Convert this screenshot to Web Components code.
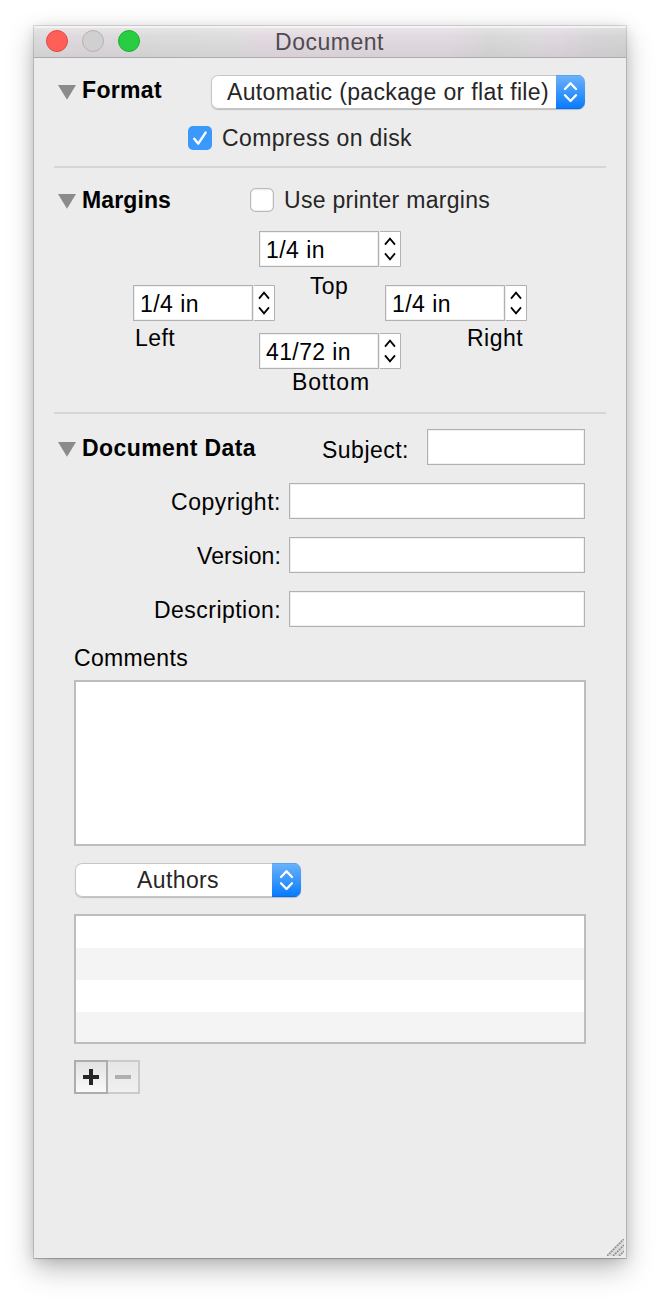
<!DOCTYPE html>
<html lang="en"><head><meta charset="utf-8"><title>Document</title>
<style>
html,body{margin:0;background:#fff}
body{width:660px;height:1300px;overflow:hidden;font:23px/26px "Liberation Sans",Arial,sans-serif;color:#000}
</style></head><body>
<document-inspector></document-inspector>
<script>
const define=(name,html,ready)=>{
  const t=document.createElement('template');t.innerHTML=html;
  customElements.define(name,class extends HTMLElement{
    constructor(){super();this.attachShadow({mode:'open'}).append(t.content.cloneNode(true));}
    connectedCallback(){ready&&ready.call(this);}
  });
};
/* A single-line label; "w" is its advance width, reached through letter spacing. */
define('text-label',`<style>:host{display:block;white-space:nowrap;height:26px;line-height:26px}span{display:inline-block}</style><span><slot></slot></span>`,function(){
  const w=+this.getAttribute('w');if(!w)return;
  const s=this.shadowRoot.querySelector('span');
  s.style.letterSpacing=(w-s.getBoundingClientRect().width)/this.textContent.length+'px';
});
define('title-bar',`<style>
:host{display:flex;box-sizing:border-box;height:32px;border-bottom:1px solid #b0a9b0;border-top:2px solid #f4f2f4;align-items:flex-start;padding-left:12px;
background:linear-gradient(#fff4,#0000 30%,#0000000c),linear-gradient(90deg,#dcdbdc 0,#dfd9de 8%,#dcdbdc 18%,#dedddd 34%,#e2dae0 38%,#e2dae1 70%,#d9d8d9 77%,#dcdbdc 83%,#e0d8e0 88%,#d7d5d7 94%,#d5d4d5)}
i{box-sizing:border-box;width:22px;height:22px;border-radius:50%;margin:2px 14px 0 0;border:1px solid}
.c{background:#ff5f57;border-color:#e2463f}.m{background:#d1d0d1;border-color:#b4b1b4}.z{background:#28cd41;border-color:#1dad2b}
::slotted(text-label){color:#504b50;margin:1px 0 0 121px}
</style><i class="c"></i><i class="m"></i><i class="z"></i><slot></slot>`);
define('disclosure-title',`<style>:host{display:flex;font-weight:bold}svg{margin:var(--tri,9px) 6px 0 0;flex:none}</style>
<svg width="18" height="15"><path d="M0 0H18L9 14.8Z" fill="#8b8b8b"/></svg><slot></slot>`);
define('popup-button',`<style>
:host{display:flex;box-sizing:border-box;height:34px;border-radius:7px;background:#fff;box-shadow:inset 0 0 0 1px #c6c6c6,0 1px 1px #0003;overflow:hidden;color:#262626}
div{flex:1;padding:4px 0 0 var(--inset)}
b{width:29px;background:linear-gradient(#6cb3fa,#067aff);box-shadow:inset 0 1px #5aa3ee,inset 0 -1px #0569ee}
svg{display:block}
</style><div><slot></slot></div><b><svg width="29" height="34" fill="none" stroke="#fff" stroke-width="2.3" stroke-linecap="round" stroke-linejoin="round"><path d="M9 14L14.5 8.3L20 14M9 20.3L14.5 26L20 20.3"/></svg></b>`);
define('check-box',`<style>:host{display:flex;color:#262626}
svg{flex:none;margin:0 10px 0 0;overflow:visible}.on{display:none}:host([checked]) .on{display:block}:host([checked]) .off{display:none}</style>
<svg class="off" width="24" height="24"><rect x=".6" y=".6" width="22.8" height="22.8" rx="5" fill="#fff" stroke="#b9b9b9" stroke-width="1.2"/><path d="M5 2H19" stroke="#f0f0f0"/></svg>
<svg class="on" width="24" height="24"><rect width="24" height="24" rx="5" fill="#3b99fc"/><path d="M6.2 12.8L10.3 17.6L17.6 6.6" fill="none" stroke="#fff" stroke-width="2.4" stroke-linecap="round" stroke-linejoin="round"/></svg><slot></slot>`);
define('text-field',`<style>:host{display:block;box-sizing:border-box;height:36px;background:#fff;border:1px solid #b1b1b1;box-shadow:inset 0 0 0 1px #f0f0f0;padding:5px 0 0 6px}</style><slot></slot>`);
define('step-field',`<style>:host{display:flex;width:142px;height:36px}text-field{width:120px;flex:none}
svg{display:block;margin-left:1px}</style>
<text-field><slot></slot></text-field><svg width="21" height="36"><path d="M0 .5H20.5V35.5H0" fill="#fff" stroke="#b1b1b1"/><path d="M5 13.6L10 7.6L15 13.6M5 22.4L10 28.4L15 22.4" fill="none" stroke="#000" stroke-width="1.8"/></svg>`);
define('rule-line',`<style>:host{display:block;height:2px;margin:0 20px;background:#d5d5d5}</style>`);
define('form-row',`<style>:host{display:flex;justify-content:flex-end;height:36px;margin:0 41px 18px 0}text-label{margin:6px 8px 0 0}text-field{width:296px}</style><text-label></text-label><text-field></text-field>`,function(){
  const old=this.shadowRoot.querySelector('text-label'),l=document.createElement('text-label');
  l.textContent=this.getAttribute('label');l.setAttribute('w',this.getAttribute('w'));old.replaceWith(l);
});
define('striped-list',`<style>:host{display:block;box-sizing:border-box;height:130px;border:2px solid #bdbdbd;background:repeating-linear-gradient(#fff 0 32px,#f4f4f4 32px 64px)}</style>`);
define('add-remove',`<style>:host{display:flex}svg{display:block}</style><svg width="66" height="34">
<defs><linearGradient id="g" x2="0" y2="1"><stop stop-color="#e2e2e2"/><stop offset="1" stop-color="#fafafa"/></linearGradient><linearGradient id="h" x2="0" y2="1"><stop stop-color="#e6e6e6"/><stop offset="1" stop-color="#f0f0f0"/></linearGradient></defs>
<rect x="33" y="1" width="32" height="32" fill="url(#h)" stroke="#cbcbcb" stroke-width="2"/><rect x="1" y="1" width="32" height="32" fill="url(#g)" stroke="#adadad" stroke-width="2"/>
<path d="M9 17H25M17 9V25" stroke="#262626" stroke-width="4"/><path d="M41 17H57" stroke="#b0b0b0" stroke-width="4"/></svg>`);
define('document-inspector',`<style>
:host{display:flex;flex-direction:column;box-sizing:border-box;width:592px;height:1232px;margin:26px 34px;background:#ececec;position:relative;
box-shadow:0 0 0 1px #00000020,0 1px 1px #0000001c,0 11px 26px #00000042,0 2px 12px #00000020}
section{box-sizing:border-box}
.row{display:flex;align-items:flex-start}
.format{height:108px;padding:17px 0 0 24px}
.format popup-button{width:374px;--inset:16px;margin-left:auto;margin-right:41px}
.format check-box{margin:17px 0 0 130px}
.format disclosure-title{margin-top:2px;--tri:8px}
.format check-box text-label,.margins check-box text-label{margin-top:-1px}
.margins{height:244px;padding:17px 0 0 24px}
.margins disclosure-title{margin-top:2px;--tri:7px}
.fields{display:flex;margin:18px 0 0 75px}
.fields>div{width:142px;flex:none}.side{padding-top:54px}.mid{margin:0 -16px}
.data{padding-top:15px}
.subject{height:54px;padding:0 41px 0 24px}
.subject disclosure-title{margin-top:6px;--tri:7px}
.subject text-label.s{margin:8px 18px 0 auto}
.subject text-field{width:158px}
.below{padding:0 40px}
textarea-box{display:block;box-sizing:border-box;height:166px;border:2px solid #bdbdbd;background:#fff}
.below popup-button{width:226px;--inset:62px;margin:17px 0 17px 1px}
add-remove{margin-top:16px}
.grip{position:absolute;right:2px;bottom:2px}
</style>
<title-bar><text-label w="109">Document</text-label></title-bar>
<section class="format"><div class="row"><disclosure-title><text-label w="80">Format</text-label></disclosure-title><popup-button><text-label w="322">Automatic (package or flat file)</text-label></popup-button></div>
<check-box checked><text-label w="190">Compress on disk</text-label></check-box></section>
<rule-line></rule-line>
<section class="margins"><div class="row"><disclosure-title><text-label w="89">Margins</text-label></disclosure-title><check-box style="margin:3px 0 0 79px"><text-label w="206">Use printer margins</text-label></check-box></div>
<div class="fields">
<div class="side"><step-field><text-label w="59">1/4 in</text-label></step-field><text-label w="40" style="margin:4px 0 0 2px">Left</text-label></div>
<div class="mid"><step-field><text-label w="59">1/4 in</text-label></step-field><text-label w="38" style="margin:6px 0 0 51px">Top</text-label><step-field style="margin-top:34px"><text-label w="85">41/72 in</text-label></step-field><text-label w="78" style="margin:0 0 0 33px">Bottom</text-label></div>
<div class="side"><step-field><text-label w="59">1/4 in</text-label></step-field><text-label w="56" style="margin:4px 0 0 82px">Right</text-label></div>
</div></section>
<rule-line></rule-line>
<section class="data"><div class="row subject"><disclosure-title><text-label w="174">Document Data</text-label></disclosure-title><text-label class="s" w="87">Subject:</text-label><text-field></text-field></div>
<form-row label="Copyright:" w="110"></form-row><form-row label="Version:" w="84"></form-row><form-row label="Description:" w="127"></form-row></section>
<section class="below"><text-label w="114" style="margin-bottom:9px">Comments</text-label>
<textarea-box></textarea-box>
<popup-button><text-label w="82">Authors</text-label></popup-button>
<striped-list></striped-list><add-remove></add-remove></section>
<svg class="grip" width="17" height="17"><path d="M0 17L17 0M6 17L17 6M12 17L17 12" stroke="#8f8f8f" stroke-width="1.8" stroke-dasharray="2 .8"/><path d="M3 17L17 3M9 17L17 9" stroke="#d4d4d4" stroke-width="1.2"/></svg>`);
</script></body></html>
